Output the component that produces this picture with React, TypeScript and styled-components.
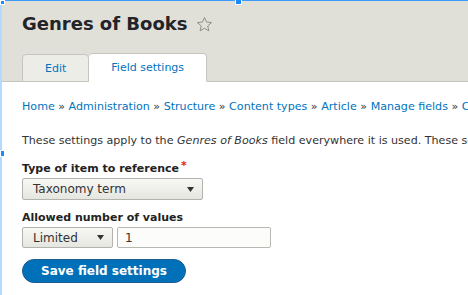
import styled, { createGlobalStyle } from 'styled-components';

const GlobalStyle = createGlobalStyle`
    html, body {
        margin: 0;
        padding: 0;
        background: #fff;
        overflow: hidden;
    }
    body {
        width: 468px;
        height: 295px;
        font-family: "DejaVu Sans", "Liberation Sans", sans-serif;
        color: #333;
    }
`

const Page = styled.div`
    position: relative;
    width: 468px;
    height: 295px;
    overflow: hidden;
`

const Header = styled.div`
    background-color: #e0e0d8;
    padding: 13px 22px 0;
    border-bottom: 1px solid #c6c5bf;
`

const TitleRow = styled.div`
    display: flex;
    align-items: center;
    gap: 9px;
    height: 22px;

    h1 {
        margin: 0;
        font-size: 18px;
        line-height: 22px;
        font-weight: bold;
        color: #232429;
    }
`

const Tabs = styled.div`
    display: flex;
    margin-top: 19px;
    margin-bottom: -1px;
`

const Tab = styled.div<{ $active?: boolean }>`
    height: ${p => p.$active ? '29px' : '28px'};
    margin-top: ${p => p.$active ? '-1px' : '0'};
    box-sizing: border-box;
    padding: 0 22px;
    display: flex;
    align-items: center;
    font-size: 11px;
    color: #0074bd;
    background-color: ${p => p.$active ? '#fff' : '#ededE7'};
    border: 1px solid #c6c5bf;
    border-bottom: ${p => p.$active ? '1px solid #fff' : '1px solid #c6c5bf'};
    border-left-width: ${p => p.$active ? '0' : '1px'};
    border-radius: 4px 4px 0 0;
`

const Content = styled.div`
    padding: 0 22px;
    white-space: nowrap;
`

const Breadcrumb = styled.div`
    margin-top: 18px;
    font-size: 11.1px;
    line-height: 14px;
    color: #0074bd;

    span {
        color: #333;
    }
`

const Intro = styled.p`
    margin: 20px 0 0;
    font-size: 11.1px;
    line-height: 14px;
    color: #333;
`

const Label = styled.div<{ $top: number }>`
    margin-top: ${p => p.$top}px;
    font-size: 11px;
    line-height: 14px;
    font-weight: bold;
    color: #222;

    .req {
        color: #e62600;
        margin-left: 2px;
        position: relative;
        top: -3px;
    }
`

const Select = styled.div<{ $width: number }>`
    width: ${p => p.$width}px;
    height: 22px;
    box-sizing: border-box;
    margin-top: 2px;
    padding: 0 8px 0 10px;
    display: flex;
    align-items: center;
    justify-content: space-between;
    font-size: 12px;
    color: #333;
    background: linear-gradient(#f7f7f4, #e6e6e1);
    border: 1px solid #b3b3ae;
    border-radius: 2px;
`

const Row = styled.div`
    display: flex;
    gap: 4px;
    align-items: center;

    ${Select} {
        height: 21px;
    }
`

const TextInput = styled.div`
    width: 154px;
    height: 21px;
    box-sizing: border-box;
    margin-top: 2px;
    padding: 0 7px;
    display: flex;
    align-items: center;
    font-size: 12px;
    color: #333;
    background: #fcfcfa;
    border: 1px solid #b8b8b3;
    border-radius: 2px;
`

const SaveButton = styled.div`
    display: inline-flex;
    align-items: center;
    height: 22px;
    margin-top: 11px;
    padding: 0 18px;
    font-size: 12px;
    font-weight: bold;
    color: #fff;
    background-color: #0071b8;
    border: 1px solid #1e5c90;
    border-radius: 12px;
`

const Frame = styled.div`
    position: absolute;
    inset: 0;
    pointer-events: none;
    border-top: 1px solid #3d9bff;
    border-left: 2px solid #b3dbff;

    .handle {
        position: absolute;
        background: #1a8cff;
        border: 1px solid #fff;
    }
`

function Caret() {
    return (
        <svg width="7" height="5" viewBox="0 0 7 5">
            <polygon points="0,0 7,0 3.5,5" fill="#333" />
        </svg>
    )
}

function StarIcon() {
    return (
        <svg width="17" height="17" viewBox="0 0 24 24">
            <polygon points="12,2 14.9,8.6 22,9.3 16.6,14 18.2,21 12,17.3 5.8,21 7.4,14 2,9.3 9.1,8.6"
                fill="none" stroke="#8f8f86" strokeWidth="1.4" strokeLinejoin="round" />
        </svg>
    )
}

export default function App() {
    return (
        <Page>
            <GlobalStyle />
            <Header>
                <TitleRow>
                    <h1>Genres of Books</h1>
                    <StarIcon />
                </TitleRow>
                <Tabs>
                    <Tab>Edit</Tab>
                    <Tab $active>Field settings</Tab>
                </Tabs>
            </Header>

            <Content>
                <Breadcrumb>
                    Home <span>»</span> Administration <span>»</span> Structure <span>»</span> Content types <span>»</span> Article <span>»</span> Manage fields <span>»</span> Category
                </Breadcrumb>
                <Intro>
                    These settings apply to the <em>Genres of Books</em> field everywhere it is used. These settings impact the way that data is stored in the database.
                </Intro>

                <Label $top={14}>Type of item to reference<span className='req'>*</span></Label>
                <Select $width={181}>
                    Taxonomy term
                    <Caret />
                </Select>

                <Label $top={11}>Allowed number of values</Label>
                <Row>
                    <Select $width={91}>
                        Limited
                        <Caret />
                    </Select>
                    <TextInput>1</TextInput>
                </Row>

                <SaveButton>Save field settings</SaveButton>
            </Content>

            <Frame>
                <div className='handle' style={{ left: -2, top: -1, width: 3, height: 3 }} />
                <div className='handle' style={{ left: 233, top: -2, width: 5, height: 4 }} />
                <div className='handle' style={{ left: -2, top: 149, width: 3, height: 5 }} />
            </Frame>
        </Page>
    )
}
